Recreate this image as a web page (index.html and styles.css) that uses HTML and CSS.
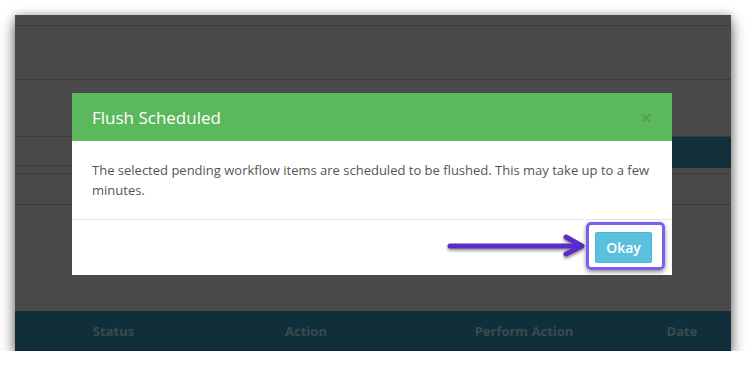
FILE: index.html
```html
<!DOCTYPE html>
<html>
<head>
<meta charset="utf-8">
<link rel="stylesheet" href="styles.css">
</head>
<body>
<div class="frame">
  <div class="row r1"></div>
  <div class="row r2"></div>
  <div class="row r3"></div>
  <div class="r4">
    <div class="r4-left"><div class="r4a"></div><div class="r4b"></div></div>
    <div class="r4-right"><div class="teal-band"></div></div>
  </div>
  <div class="row r5"></div>
  <div class="spacer"></div>
  <div class="table-head">
    <div class="th">Status</div>
    <div class="th">Action</div>
    <div class="th">Perform Action</div>
    <div class="th">Date</div>
    <div class="th"></div>
  </div>

  <div class="modal">
    <div class="modal-header">
      <h4 class="modal-title">Flush Scheduled</h4>
      <span class="close">×</span>
    </div>
    <div class="modal-body">The selected pending workflow items are scheduled to be flushed. This may take up to a few minutes.</div>
    <div class="modal-footer">
      <button class="btn-okay">Okay</button>
    </div>
  </div>

  <svg class="arrow" width="150" height="30" viewBox="0 0 150 30">
    <g fill="none" stroke="#5a2ec6" stroke-width="5" stroke-linecap="round" stroke-linejoin="round">
      <line x1="5" y1="14" x2="136" y2="14"/>
      <polyline points="121,5 137,14 121,22"/>
    </g>
  </svg>
  <div class="highlight"></div>
</div>
</body>
</html>
```

FILE: styles.css
```css
html, body {
  margin: 0;
  padding: 0;
  background: #ffffff;
}
body {
  padding: 15px 0 0 15px;
  font-family: "Open Sans", "Liberation Sans", sans-serif;
}
.frame {
  position: relative;
  width: 716px;
  height: 336px;
  background: #4a4a4a;
  box-shadow: 0 7px 14px rgba(0,0,0,0.55), 0 0 8px rgba(0,0,0,0.25);
  display: flex;
  flex-direction: column;
}
.row {
  border-bottom: 1px solid #3b3b3b;
  flex: none;
}
.r1 { height: 10px; }
.r2 { height: 53px; }
.r3 { height: 56px; }
.r4 {
  height: 37px;
  display: grid;
  grid-template-columns: 570px 1fr;
  flex: none;
}
.r4a { height: 28px; border-bottom: 1px solid #3b3b3b; }
.r4b { height: 7px; border-bottom: 1px solid #3b3b3b; }
.teal-band {
  height: 31px;
  background: #12303a;
  border-bottom: 5px solid #4a4a4a;
  box-shadow: 0 1px 0 #3b3b3b;
}
.r5 { height: 30px; }
.spacer { height: 106px; flex: none; }
.table-head {
  height: 39px;
  background: #112f3a;
  border-bottom: 1px solid #0c2229;
  display: grid;
  grid-template-columns: 197px 188px 248px 68px 1fr;
  align-items: center;
  flex: none;
}
.th {
  text-align: center;
  font-weight: 700;
  font-size: 13px;
  color: #3a4a4f;
}
.modal {
  position: absolute;
  left: 57px;
  top: 78px;
  width: 600px;
  background: #ffffff;
}
.modal-header {
  height: 48px;
  background: #5cb85c;
  display: flex;
  align-items: center;
  justify-content: space-between;
  padding: 0 20px;
}
.modal-title {
  margin: 0;
  font-size: 17px;
  font-weight: 400;
  color: #ffffff;
}
.close {
  font-size: 20px;
  font-weight: 700;
  color: rgba(0,0,0,0.15);
  line-height: 1;
  margin-right: 0;
  margin-top: 2px;
}
.modal-body {
  padding: 20px 20px 19px;
  font-size: 13px;
  line-height: 19.5px;
  color: #555555;
  border-bottom: 1px solid #e5e5e5;
}
.modal-footer {
  height: 55px;
  display: flex;
  justify-content: flex-end;
  align-items: flex-start;
  padding: 12px 20px 0;
  box-sizing: border-box;
}
.btn-okay {
  width: 57px;
  height: 31px;
  background: #5bc0de;
  border: 1px solid #46b8da;
  border-radius: 2px;
  color: #ffffff;
  font-family: "Open Sans", "Liberation Sans", sans-serif;
  font-size: 14px;
  font-weight: 600;
  padding: 0;
}
.arrow {
  position: absolute;
  left: 430px;
  top: 217px;
  filter: drop-shadow(0 2px 1.5px rgba(0,0,0,0.45));
}
.highlight {
  position: absolute;
  left: 571px;
  top: 207px;
  width: 79px;
  height: 48px;
  box-sizing: border-box;
  border: 3px solid #7d5cf2;
  border-radius: 5px;
  box-shadow: 0 2px 4px rgba(0,0,0,0.45);
}
```
